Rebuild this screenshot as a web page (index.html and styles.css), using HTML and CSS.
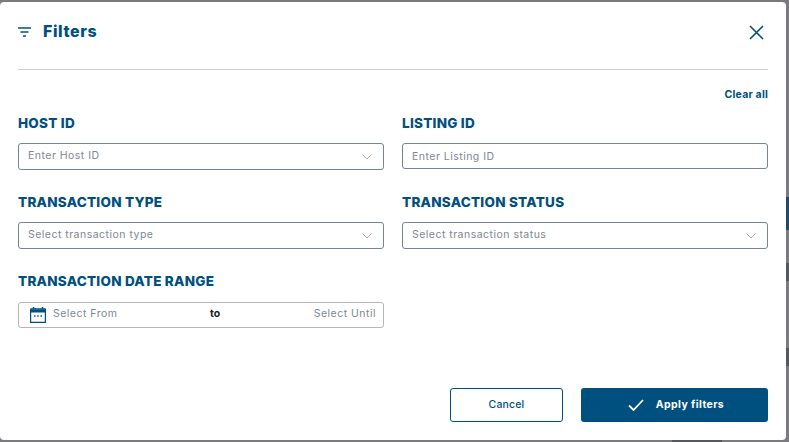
FILE: index.html
```html
<!DOCTYPE html>
<html lang="en">
<head>
<meta charset="utf-8">
<title>Filters</title>
<link rel="stylesheet" href="styles.css">
</head>
<body>
<div class="dialog">
  <header class="head">
    <svg class="filter-icon" width="14" height="10" viewBox="0 0 14 10"><path d="M0 1h13M2.500 5h8M5 9h3" stroke="#00507f" stroke-width="1.500" fill="none"/></svg>
    <h1 class="title">Filters</h1>
    <svg class="close" width="15" height="15" viewBox="0 0 15 15"><path d="M1 1l13 13M14 1L1 14" stroke="#00507f" stroke-width="1.600" fill="none"/></svg>
  </header>
  <div class="clear-row"><span class="clear">Clear all</span></div>
  <div class="grid">
    <div class="field">
      <label class="label">HOST ID</label>
      <div class="input"><span class="hint">Enter Host ID</span><svg class="chev" width="10" height="6" viewBox="0 0 10 6"><path d="M.5.500L5 5 9.500.5" stroke="#a9b1bb" fill="none"/></svg></div>
    </div>
    <div class="field">
      <label class="label">LISTING ID</label>
      <div class="input plain"><span>Enter Listing ID</span></div>
    </div>
    <div class="field">
      <label class="label">TRANSACTION TYPE</label>
      <div class="input"><span class="hint">Select transaction type</span><svg class="chev" width="10" height="6" viewBox="0 0 10 6"><path d="M.5.500L5 5 9.500.5" stroke="#a9b1bb" fill="none"/></svg></div>
    </div>
    <div class="field">
      <label class="label">TRANSACTION STATUS</label>
      <div class="input"><span class="hint">Select transaction status</span><svg class="chev" width="10" height="6" viewBox="0 0 10 6"><path d="M.5.500L5 5 9.500.5" stroke="#a9b1bb" fill="none"/></svg></div>
    </div>
    <div class="field">
      <label class="label">TRANSACTION DATE RANGE</label>
      <div class="input date">
        <svg class="cal" width="16" height="16" viewBox="0 0 16 16"><path d="M3.500 0v3M12.500 0v3" stroke="#00507f" stroke-width="1.500"/><path d="M1 2h14a.5.500 0 0 1 .5.500v12.500a.5.500 0 0 1-.5.500H1a.5.500 0 0 1-.5-.5V2.500A.5.500 0 0 1 1 2z" fill="#fff" stroke="#00507f" stroke-width="1.400"/><path d="M.5 2.500h15V5.500H.5z" fill="#00507f"/><path d="M4 9h1.500M7.250 9h1.500M10.500 9H12" stroke="#00507f" stroke-width="1.300"/></svg>
        <span class="from hint">Select From</span>
        <span class="to hint">to</span>
        <span class="until hint">Select Until</span>
      </div>
    </div>
  </div>
  <footer class="foot">
    <button class="btn cancel"><span>Cancel</span></button>
    <button class="btn apply"><svg width="16" height="12" viewBox="0 0 16 12"><path d="M1 6.500L5.500 11 15 1" stroke="#fff" stroke-width="1.800" fill="none"/></svg><span>Apply filters</span></button>
  </footer>
</div>
</body>
</html>
```
FILE: styles.css
```css
* { box-sizing: border-box; }
html, body { margin: 0; height: 100%; }
body {
  width: 789px;
  height: 442px;
  overflow: hidden;
  background-color: #7b7b7f;
  background-image:
    linear-gradient(#204a6b, #204a6b),
    linear-gradient(#56575f, #56575f),
    linear-gradient(#56575f, #56575f),
    linear-gradient(#56575f, #56575f);
  background-repeat: no-repeat;
  background-size: 3px 33px, 3px 18px, 3px 18px, 50px 2px;
  background-position: 786px 197px, 786px 263px, 786px 348px, 672px 440px;
  font-family: "Inter", "Open Sans", sans-serif;
}
.dialog {
  width: 786px;
  height: 438px;
  margin-top: 2px;
  padding: 0 18px;
  background: #fff;
  border-radius: 4px;
  display: flex;
  flex-direction: column;
}
.head {
  flex: none;
  height: 68px;
  border-bottom: 1px solid #cfcfcf;
  display: flex;
  align-items: flex-start;
  padding-top: 20px;
}
.filter-icon { margin-top: 5px; flex: none; }
.title {
  margin: 0 0 0 11px;
  font-size: 16px;
  line-height: 18px;
  font-weight: 800;
  letter-spacing: .6px;
  color: #00507f;
}
.close { margin-left: auto; margin-top: 3px; margin-right: 4px; }
.clear-row {
  flex: none;
  display: flex;
  justify-content: flex-end;
  height: 44px;
  padding-top: 18px;
}
.clear {
  font-size: 10.500px;
  line-height: 14px;
  font-weight: 700;
  letter-spacing: .2px;
  color: #00507f;
}
.grid {
  display: grid;
  grid-template-columns: 366px 366px;
  column-gap: 18px;
  row-gap: 23px;
}
.field { display: flex; flex-direction: column; gap: 11px; }
.label {
  font-size: 13.500px;
  line-height: 18px;
  font-weight: 800;
  letter-spacing: .25px;
  color: #00507f;
}
.input {
  height: 27px;
  border: 1px solid #76869a;
  border-radius: 3px;
  padding: 0 9px;
  display: flex;
  align-items: center;
  justify-content: space-between;
  font-size: 10.500px;
  letter-spacing: .48px;
  color: #7d8795;
}
.plain { height: 26px; }
.hint { margin-bottom: 2px; }
.chev { margin-right: 2px; flex: none; }
.date {
  position: relative;
  height: 26px;
  margin-top: 1px;
  border-color: #b4b6b9;
  padding: 0 7px 0 11px;
  justify-content: flex-start;
}
.date .hint { margin-bottom: 3px; }
.cal { flex: none; }
.from { margin-left: 7px; }
.until { margin-left: auto; }
.to {
  position: absolute;
  left: 191px;
  font-weight: 700;
  letter-spacing: 0;
  color: #1b1b1b;
}
.foot {
  margin-top: auto;
  margin-bottom: 18px;
  display: flex;
  justify-content: flex-end;
  gap: 18px;
}
.btn {
  height: 34px;
  border-radius: 3px;
  font-family: inherit;
  font-size: 10.500px;
  display: flex;
  align-items: center;
  justify-content: center;
  padding: 0 0 1px;
}
.cancel {
  width: 113px;
  border: 1px solid #00507f;
  background: #fff;
  color: #00507f;
  font-weight: 500;
  letter-spacing: .15px;
}
.apply {
  width: 187px;
  border: 0;
  background: #00507f;
  color: #fff;
  font-weight: 700;
  letter-spacing: .4px;
  gap: 12px;
  padding-left: 3px;
}
```
